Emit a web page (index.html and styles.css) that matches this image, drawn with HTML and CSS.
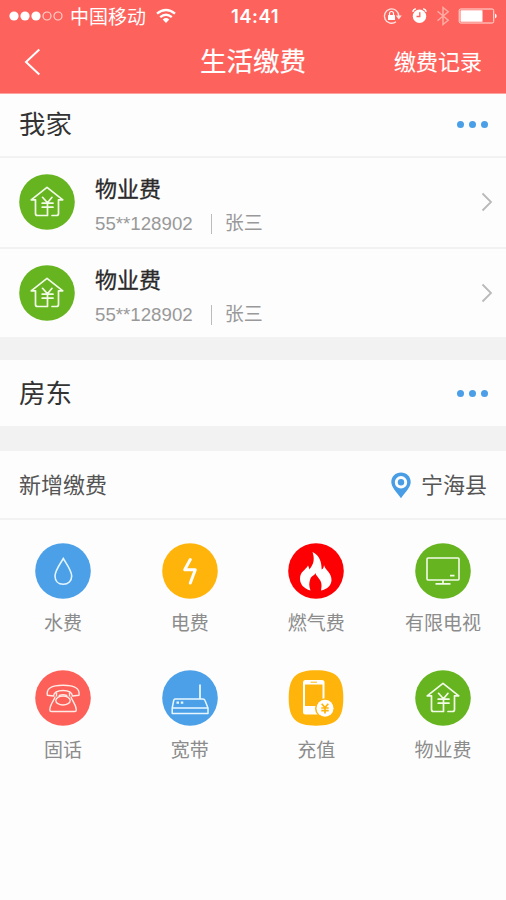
FILE: index.html
```html
<!DOCTYPE html>
<html lang="zh-CN">
<head>
<meta charset="utf-8">
<meta name="viewport" content="width=device-width, initial-scale=1">
<title>生活缴费</title>
<link rel="stylesheet" href="styles.css">
</head>
<body>
<svg class="defs" width="0" height="0">
  <symbol id="house" viewBox="0 0 56 56">
    <circle cx="28" cy="28" r="27.8" fill="#67b421"/>
    <g fill="none" stroke="#f2fbe8" stroke-width="1.7" stroke-linejoin="round" stroke-linecap="round">
      <path d="M27.5 41.5H18.5Q16.5 41.5 16.5 39.500V25.800H12.200L28 13.300L43.800 25.800H39.500V39.500Q39.500 41.500 37.500 41.500H33"/>
      <path d="M23.500 23.300L28.500 28.800L33 23.300M23.200 29.200H34M23.200 33.200H34M28.500 28.800V41.500"/>
    </g>
  </symbol>
  <symbol id="next" viewBox="0 0 12 20">
    <path d="M1.500 1.500L10 10L1.500 18.500" fill="none" stroke="#b9b9b9" stroke-width="1.800"/>
  </symbol>
</svg>
<header class="header">
  <div class="status">
    <div class="carrier">
      <svg class="signal" width="55" height="12" viewBox="0 0 55 12">
        <g fill="#fff"><circle cx="5" cy="6" r="4.600"/><circle cx="16" cy="6" r="4.600"/><circle cx="27" cy="6" r="4.600"/></g>
        <g fill="none" stroke="#ffd0cb" stroke-width="1.200"><circle cx="38" cy="6" r="4"/><circle cx="49" cy="6" r="4"/></g>
      </svg>
      <span class="operator">中国移动</span>
      <svg class="wifi" width="20" height="16" viewBox="0 0 20 16">
        <g fill="none" stroke="#fff" stroke-width="2.400"><path d="M1 5.700Q10-1.900 19 5.700"/><path d="M4.200 9.200Q10 4.300 15.800 9.200"/></g>
        <path d="M6.700 11.500Q10 8.700 13.300 11.500L10 15Z" fill="#fff"/>
      </svg>
    </div>
    <span class="time">14:41</span>
    <svg class="indicators" width="116" height="22" viewBox="0 0 116 22">
      <path d="M14 16.800A7.200 7.200 0 1 1 16.800 11" fill="none" stroke="#ffe4e0" stroke-width="1.400"/>
      <path d="M13.800 10.500H19.800L16.800 14.500Z" fill="#ffe4e0"/>
      <rect x="6" y="10" width="7" height="5" rx=".6" fill="#fff"/>
      <path d="M7.500 10V8.500a2 2 0 0 1 4 0V10" fill="none" stroke="#fff" stroke-width="1.200"/>
      <circle cx="37.500" cy="11.300" r="6.700" fill="#fff"/>
      <path d="M30.700 6.700Q31.300 4.400 33.800 3.800M41.200 3.800Q43.700 4.400 44.300 6.700" fill="none" stroke="#fff" stroke-width="1.500"/>
      <path d="M37.800 7.200V11.500H34.500" fill="none" stroke="#fe625c" stroke-width="1.300"/>
      <path d="M55.500 6.300L66.200 15.300L61 19.500V2.500L66.200 6.700L55.500 15.700" fill="none" stroke="#ffaaa3" stroke-width="1.500"/>
      <rect x="77.200" y="4" width="34.500" height="14" rx="1.500" fill="none" stroke="#ffe1dc" stroke-width="1"/>
      <rect x="78.500" y="5.300" width="22" height="11.400" rx=".5" fill="#fff"/>
      <path d="M113 8.500Q116.500 11 113 13.500Z" fill="#fff"/>
    </svg>
  </div>
  <nav class="nav">
    <svg class="back" width="17" height="28" viewBox="0 0 17 28"><path d="M15.300 1.500L2 14L15.300 26.500" fill="none" stroke="#fff" stroke-width="2"/></svg>
    <h1 class="title">生活缴费</h1>
    <span class="history">缴费记录</span>
  </nav>
</header>
<main>
  <section class="group">
    <div class="group-head home"><h2>我家</h2><span class="more"><i></i><i></i><i></i></span></div>
    <div class="bill">
      <svg class="bill-icon"><use href="#house"/></svg>
      <div class="bill-text"><h3>物业费</h3><p><span>55**128902</span><span class="owner">张三</span></p></div>
      <svg class="next"><use href="#next"/></svg>
    </div>
    <div class="bill second">
      <svg class="bill-icon"><use href="#house"/></svg>
      <div class="bill-text"><h3>物业费</h3><p><span>55**128902</span><span class="owner">张三</span></p></div>
      <svg class="next"><use href="#next"/></svg>
    </div>
  </section>
  <section class="group landlord">
    <div class="group-head"><h2>房东</h2><span class="more"><i></i><i></i><i></i></span></div>
  </section>
  <section class="group">
    <div class="add-head">
      <span>新增缴费</span>
      <div class="place">
        <svg width="20" height="27" viewBox="0 0 20 27"><path fill="#489de4" fill-rule="evenodd" d="M10 .5C4.500.500.300 4.600.300 10C.300 15 5 19.500 10 26.300C15 19.500 19.700 15 19.700 10C19.700 4.600 15.500.500 10 .500ZM10 4.100A6.200 6.200 0 1 1 10 16.500A6.200 6.200 0 1 1 10 4.100Z"/><circle cx="10" cy="10.300" r="3.200" fill="#489de4"/></svg>
        <span>宁海县</span>
      </div>
    </div>
    <div class="services">
      <div class="service">
        <svg viewBox="0 0 56 56"><circle cx="28" cy="28" r="27.800" fill="#4ba0e8"/><path d="M28.300 15.500C26 19.500 20 27.500 20 33C20 38 23.300 41.300 28.300 41.300C33.300 41.300 36.700 38 36.700 33C36.700 27.500 30.600 19.500 28.300 15.500Z" fill="none" stroke="#e3f5ff" stroke-width="1.600"/></svg>
        <span>水费</span>
      </div>
      <div class="service">
        <svg viewBox="0 0 56 56"><circle cx="28" cy="28" r="27.800" fill="#ffb40c"/><path d="M28.300 16.500L22.700 26.800H33.300L28.300 40" fill="none" stroke="#fff" stroke-width="3" stroke-linejoin="round" stroke-linecap="round"/></svg>
        <span>电费</span>
      </div>
      <div class="service">
        <svg viewBox="0 0 56 56"><circle cx="28" cy="28" r="27.800" fill="#fc0004"/><path fill="#fff" d="M22.500 47.500C15.500 45.500 12 41 12 35.700C12 28.500 17.500 27.300 20 22.500C20.700 24 21.200 24.700 21.300 26.500C26.500 20.500 26.500 15 24.500 9C32 12.500 33.500 19.500 33.700 26.500C35.500 25.500 35.700 24 36 22C37 27 43.500 29.500 43.500 37C43.500 42 39.500 46.300 33 47.500C33.300 45.700 33.500 44.500 33.500 42C33.500 36.500 28.500 34 27.300 30C26.500 32.800 23.500 32.500 22.300 36C20.800 40.500 21 43 22.500 47.500Z"/></svg>
        <span>燃气费</span>
      </div>
      <div class="service">
        <svg viewBox="0 0 56 56"><circle cx="28" cy="28" r="27.800" fill="#67b421"/><rect x="12" y="15" width="32" height="22" rx="1" fill="none" stroke="#f2fbe8" stroke-width="1.600"/><path d="M35 32.700H39.500M28 37V40.700M20.500 40.800H35.500" stroke="#f2fbe8" stroke-width="1.700" fill="none"/></svg>
        <span>有限电视</span>
      </div>
      <div class="service">
        <svg viewBox="0 0 56 56"><circle cx="28" cy="28" r="27.800" fill="#fc6058"/><g fill="none" stroke="#ffebe6" stroke-width="1.400" stroke-linejoin="round"><path d="M18.500 26L12.300 25.200C11.300 18.500 16 15.300 28 15.300C40 15.300 45 18.500 44 25.200L37.500 26Q36.700 20.500 28 20.500Q19.300 20.500 18.500 26Z"/><path d="M20 26.500C20 29.500 15 33.500 14.800 40Q14.800 41.500 16.500 41.500H39.700Q41.300 41.500 41.300 40C41 33.500 36 29.500 36 26.500"/><ellipse cx="28" cy="30.500" rx="7.200" ry="4.500"/><path d="M21.500 26.500V22.500M24.300 26.200V25.500Q28 23.800 31.700 25.500V26.200M34.500 26.500V22.500"/></g></svg>
        <span>固话</span>
      </div>
      <div class="service">
        <svg viewBox="0 0 56 56"><circle cx="28" cy="28" r="27.800" fill="#4ba0e8"/><g fill="none" stroke="#e8f7ff" stroke-width="1.500" stroke-linejoin="round"><path d="M13.200 29H40.800Q42.500 29 43 30.500L46 38V43.500H10.200V38L11.700 30.500Q12 29 13.200 29ZM10.500 38H45.700"/><path d="M38 29V14.500" stroke-width="1.800"/><path d="M14.500 32.700H17M18.800 32.700H21.300" stroke-width="2.200"/></g></svg>
        <span>宽带</span>
      </div>
      <div class="service">
        <svg viewBox="0 0 56 56"><path d="M28 .3C48 .3 55.300 7 55.300 28S48 55.700 28 55.700S.700 49 .700 28S8 .300 28 .300Z" fill="#ffb40c"/><rect x="15" y="10" width="21.500" height="34.500" rx="2.500" fill="#fff"/><path d="M17 14.500H34.500V36H17Z" fill="#ffb40c"/><path d="M22.500 12.200H29" stroke="#ffb40c" stroke-width="1"/><circle cx="37" cy="38.300" r="10" fill="#ffb40c"/><circle cx="37" cy="38.300" r="8.500" fill="#fff"/><path d="M33.700 33.700L37 37.500L40.300 33.700M33.300 38H40.700M33.300 40.700H40.700M37 37.500V43.500" fill="none" stroke="#ffb40c" stroke-width="1.700"/></svg>
        <span>充值</span>
      </div>
      <div class="service">
        <svg viewBox="0 0 56 56"><use href="#house"/></svg>
        <span>物业费</span>
      </div>
    </div>
  </section>
</main>
</body>
</html>
```

FILE: styles.css
```css
* { box-sizing: border-box; }
body {
  margin: 0;
  min-height: 900px;
  background: #fdfdfd;
  color: #333;
  font-family: "Liberation Sans", "Noto Sans CJK SC", sans-serif;
}
h1, h2, h3, p { margin: 0; font-weight: 400; }
svg { display: block; flex: none; }
.defs { position: absolute; }
.header { height: 94px; background: #fe625c; color: #fff; border-bottom: 1px solid #fea29d; }
.status { display: grid; grid-template-columns: 1fr auto 1fr; align-items: center; height: 32px; padding: 0 8px 0 9px; }
.carrier { display: flex; align-items: center; }
.operator { margin-left: 6px; padding-top: 3px; font-size: 19px; line-height: 29px; }
.wifi { margin-left: 10px; }
.time { font: 600 18.500px/32px Inter, sans-serif; letter-spacing: 0.500px; padding-left: 3px; }
.indicators { justify-self: end; }
.nav { display: grid; grid-template-columns: 1fr auto 1fr; align-items: center; height: 61px; padding: 0 24px 2px; }
.title { font-size: 26.500px; line-height: 40px; -webkit-text-stroke: 0.200px currentColor; }
.history { justify-self: end; padding-top: 2px; font-size: 22px; line-height: 34px; -webkit-text-stroke: 0.100px currentColor; }
.group-head { display: flex; align-items: center; justify-content: space-between; height: 66px; padding: 0 18px 0 19px; }
.group-head.home { height: 64px; padding-bottom: 2px; border-bottom: 2px solid #f2f2f2; }
h2 { padding-top: 2px; font-size: 26.500px; line-height: 40px; }
.more { display: flex; gap: 5px; padding-top: 1px; }
.more i { width: 7px; height: 7px; border-radius: 50%; background: #4b9fe7; }
.bill { display: flex; align-items: center; height: 91px; padding: 0 13px 1px 19px; border-bottom: 2px solid #f2f2f2; }
.bill.second { height: 88px; padding-bottom: 0; border-bottom: 0; }
.bill-icon { width: 56px; height: 56px; }
.bill-text { flex: 1; margin-left: 20px; padding-top: 9px; }
h3 { font-size: 22px; line-height: 34px; color: #2a2a2a; -webkit-text-stroke: 0.300px currentColor; }
.bill p { display: flex; align-items: center; height: 34px; color: #999; font-size: 18.700px; }
.owner { margin-left: 18px; padding-left: 13px; border-left: 1px solid #bbb; line-height: 20px; font-size: 19px; }
.next { width: 12px; height: 20px; }
.landlord { border: solid #f2f2f2; border-width: 23px 0 25px; }
.add-head { display: flex; align-items: center; justify-content: space-between; height: 69px; padding: 1px 19px 0; border-bottom: 2px solid #f2f2f2; font-size: 22px; line-height: 32px; color: #555; }
.add-head span { padding-top: 2px; }
.place { display: flex; align-items: center; gap: 10px; }
.services { display: grid; grid-template-columns: repeat(4, 126.700px); grid-auto-rows: 127px; padding-top: 23px; justify-content: center; }
.service { display: flex; flex-direction: column; align-items: center; font-size: 19px; line-height: 28px; color: #8c8c8c; }
.service svg { width: 56px; height: 56px; margin-bottom: 11px; }
```
